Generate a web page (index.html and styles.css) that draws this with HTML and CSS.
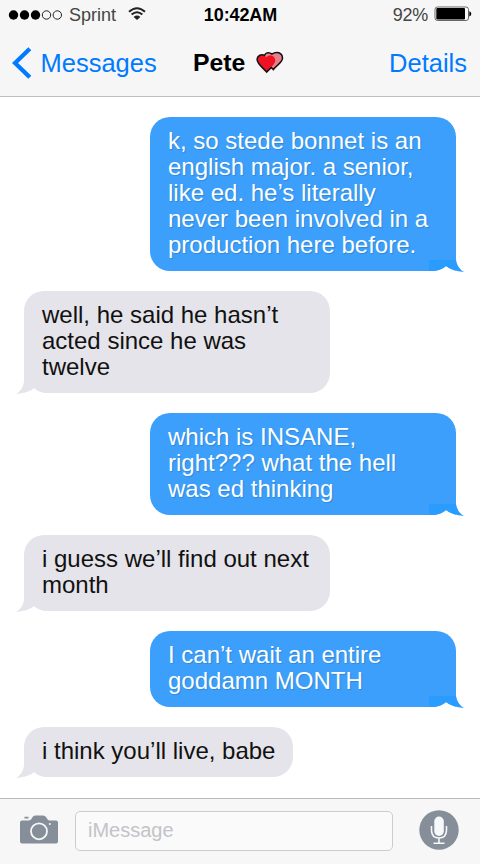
FILE: index.html
```html
<!DOCTYPE html>
<html lang="en">
<head>
    <meta charset="UTF-8">
    <meta name="viewport" content="width=device-width, initial-scale=1.0">
    <title>Messages</title>
    <link rel="stylesheet" href="styles.css">
</head>
<body>
    <div class="phone">
        <header class="header">
            <div class="status">
                <div class="carrier">
                    <svg class="signal" width="54" height="10" viewBox="0 0 54 10">
                        <circle cx="5.5" cy="5" r="4.7"/>
                        <circle cx="16.5" cy="5" r="4.7"/>
                        <circle cx="27.5" cy="5" r="4.7"/>
                        <circle class="empty" cx="38.5" cy="5" r="4.2"/>
                        <circle class="empty" cx="49.3" cy="5" r="4.2"/>
                    </svg>
                    <span>Sprint</span>
                    <svg class="wifi" width="18" height="14" viewBox="0 0 18 14">
                        <path d="M1 4.7Q9-2.3 17 4.7M3.6 7.6Q9 3 14.4 7.6"/>
                        <path class="dot" d="M5.6 9.9Q9 7.2 12.4 9.9L9 13z"/>
                    </svg>
                </div>
                <div class="time">10:42AM</div>
                <div class="power">
                    <span>92%</span>
                    <svg width="38" height="16" viewBox="0 0 38 16">
                        <rect x="1" y="1" width="33.5" height="13.5" rx="2.5" fill="#fff" stroke="#666"/>
                        <rect x="2.3" y="2" width="28.7" height="11.5" rx="1"/>
                        <path d="M35.3 5.2q2 .5 2 2.6t-2 2.6z"/>
                    </svg>
                </div>
            </div>
            <nav class="nav">
                <a class="back">
                    <svg width="20" height="32" viewBox="0 0 20 32">
                        <path d="M17.8 1.8L3 16L17.8 30.2"/>
                    </svg>
                    <span>Messages</span>
                </a>
                <div class="title">
                    <span>Pete</span>
                    <svg width="29" height="23" viewBox="0 0 30 24">
                        <path fill="#e87f8b" d="M18 21L9 10C7 4 12 0 16.5 3.2C21 0 27.5 1.5 27.5 7.5C27.5 12 22 15.5 18 21z"/>
                        <path fill="#ee1224" d="M11 22C8 18 1 14 1 8.7C1 3.5 7.5 2 10.7 6.4C14 3 20 5 20 10C20 14 14.5 17.5 11 22z"/>
                        <path class="outline" d="M8.8 4.4C10 1.2 14 1 16.5 3.2C21 0 27.5 1.5 27.5 7.5C27.5 12 21.5 14.5 18 19.2L15.8 17.2L11 22C8 18 1 14 1 8.7C1 5.2 5 3 8.8 4.4z"/>
                    </svg>
                </div>
                <a class="details">Details</a>
            </nav>
        </header>

        <main class="chat">
            <div class="bubble sent">
                k, so stede bonnet is an<br>english major. a senior,<br>like ed. he’s literally<br>never been involved in a<br>production here before.
                <svg class="tail" width="35" height="12" viewBox="0 0 35 12"><path class="notch" d="M4 11Q12 10.5 17 6Q23 11 35 12H4z"/><path d="M0 0H27Q28.5 8.5 35 12Q23 11 17 6Q12 10.5 4 11H0z"/></svg>
            </div>
            <div class="bubble received">
                well, he said he hasn’t<br>acted since he was<br>twelve
                <svg class="tail" width="35" height="12" viewBox="0 0 35 12"><path class="notch" d="M31 11Q23 10.5 18 6Q12 11 0 12H31z"/><path d="M35 0H8Q6.5 8.5 0 12Q12 11 18 6Q23 10.5 31 11H35z"/></svg>
            </div>
            <div class="bubble sent">
                which is INSANE,<br>right??? what the hell<br>was ed thinking
                <svg class="tail" width="35" height="12" viewBox="0 0 35 12"><path class="notch" d="M4 11Q12 10.5 17 6Q23 11 35 12H4z"/><path d="M0 0H27Q28.5 8.5 35 12Q23 11 17 6Q12 10.5 4 11H0z"/></svg>
            </div>
            <div class="bubble received">
                i guess we’ll find out next<br>month
                <svg class="tail" width="35" height="12" viewBox="0 0 35 12"><path class="notch" d="M31 11Q23 10.5 18 6Q12 11 0 12H31z"/><path d="M35 0H8Q6.5 8.5 0 12Q12 11 18 6Q23 10.5 31 11H35z"/></svg>
            </div>
            <div class="bubble sent">
                I can’t wait an entire<br>goddamn MONTH
                <svg class="tail" width="35" height="12" viewBox="0 0 35 12"><path class="notch" d="M4 11Q12 10.5 17 6Q23 11 35 12H4z"/><path d="M0 0H27Q28.5 8.5 35 12Q23 11 17 6Q12 10.5 4 11H0z"/></svg>
            </div>
            <div class="bubble received short">
                i think you’ll live, babe
                <svg class="tail" width="35" height="12" viewBox="0 0 35 12"><path class="notch" d="M31 11Q23 10.5 18 6Q12 11 0 12H31z"/><path d="M35 0H8Q6.5 8.5 0 12Q12 11 18 6Q23 10.5 31 11H35z"/></svg>
            </div>
        </main>

        <footer class="footer">
            <svg class="camera" width="38" height="29" viewBox="0 0 38 29">
                <path fill="#858e99" d="M2 5.5H9Q11 5.3 12 3L13 1.5Q14 .5 15.5 .5H23Q25 .5 26 2L27.5 4.3Q28.3 5.5 30 5.5H36Q38 5.5 38 7.5V26.5Q38 28.5 36 28.5H2Q0 28.5 0 26.5V7.5Q0 5.5 2 5.5zM4.5 1.8H8.5V3.5H4.5z"/>
                <circle cx="19" cy="16.3" r="8" fill="none" stroke="#f7f7f7" stroke-width="1.8"/>
                <circle cx="29.8" cy="9" r="1" fill="#f7f7f7"/>
            </svg>
            <div class="field">iMessage</div>
            <svg class="mic" width="40" height="40" viewBox="0 0 40 40">
                <circle cx="20" cy="20" r="19.7" fill="#858e99"/>
                <rect x="15.3" y="6.5" width="9.5" height="19.5" rx="4.7" fill="#f7f8fa"/>
                <path fill="none" stroke="#f7f8fa" stroke-width="1.6" d="M12.5 16V20.5Q12.8 28 20 28Q27.2 28 27.5 20.5V16M20 28V33M14.5 33.2H25.5"/>
            </svg>
        </footer>
    </div>
</body>
</html>
```
FILE: styles.css
```css
body {
    margin: 0;
    font-family: "Liberation Sans", Arial, sans-serif;
    background-color: #fff;
}
.phone {
    display: flex;
    flex-direction: column;
    width: 480px;
    height: 864px;
    overflow: hidden;
}

/* Header */
.header {
    box-sizing: border-box;
    height: 97px;
    background-color: #f6f6f6;
    border-bottom: 1px solid #bebebe;
}
.status {
    display: flex;
    justify-content: space-between;
    height: 30px;
    padding: 0 7px 0 8px;
    font-size: 18px;
    line-height: 30px;
    color: #444;
}
.carrier, .power {
    display: flex;
    align-items: center;
    width: 180px;
}
.power {
    justify-content: flex-end;
    gap: 6px;
}
.power svg {
    margin: 0 1px 3px 0;
}
.power span {
    letter-spacing: -0.3px;
}
.signal {
    margin-right: 7px;
}
.signal .empty {
    fill: none;
    stroke: #222;
    stroke-width: 1;
}
.wifi {
    margin: 0 0 3px 12px;
    fill: none;
    stroke: #222;
    stroke-width: 2;
}
.wifi .dot {
    fill: #222;
    stroke: none;
}
.time {
    font-weight: bold;
    color: #000;
    letter-spacing: -0.1px;
}
.nav {
    display: flex;
    justify-content: space-between;
    align-items: center;
    height: 66px;
    padding: 0 13px 0 12px;
    font-size: 25.5px;
}
.back, .details {
    display: flex;
    align-items: center;
    color: #007aff;
}
.back {
    gap: 8.5px;
    width: 181px;
}
.back path {
    fill: none;
    stroke: #007aff;
    stroke-width: 4.3;
}
.title {
    display: flex;
    align-items: center;
    gap: 10.5px;
    flex: 1;
    font-size: 24.8px;
    font-weight: bold;
}
.title svg {
    margin-top: -1px;
}
.title .outline {
    fill: none;
    stroke: #111;
    stroke-width: 1.6;
}

/* Messages */
.chat {
    display: flex;
    flex: 1;
    flex-direction: column;
    align-items: flex-start;
    gap: 20px;
    padding: 20px 24px 0;
}
.bubble {
    position: relative;
    box-sizing: border-box;
    width: 306px;
    padding: 11px 18px 13px;
    border-radius: 20px;
    font-size: 24px;
    line-height: 26px;
    white-space: nowrap;
}
.sent {
    align-self: flex-end;
    border-bottom-right-radius: 0;
    background-color: #3b9ffb;
    color: #fff;
    text-shadow: 1px 1px 1px rgba(0, 0, 0, 0.15);
}
.received {
    border-bottom-left-radius: 0;
    background-color: #e5e4ea;
    color: #111;
}
.short {
    width: 269px;
}
.tail {
    position: absolute;
    bottom: -1px;
}
.sent .tail {
    right: -8px;
    fill: #2a9bff;
}
.received .tail {
    left: -8px;
    fill: #e5e4ea;
}
.tail .notch {
    fill: #fff;
}

/* Footer */
.footer {
    display: flex;
    align-items: center;
    box-sizing: border-box;
    height: 66px;
    padding: 0 21px 4px 20px;
    background-color: #f7f7f7;
    border-top: 1px solid #b9b9b9;
}
.camera {
    margin: 0 17px 1px 0;
}
.field {
    box-sizing: border-box;
    width: 318px;
    height: 40px;
    margin-top: 2px;
    padding-left: 12px;
    border: 1px solid #ccc;
    border-radius: 5px;
    background-color: #fafafa;
    color: #c3c3c8;
    font-size: 20px;
    line-height: 37px;
}
.mic {
    margin-left: auto;
}
```
